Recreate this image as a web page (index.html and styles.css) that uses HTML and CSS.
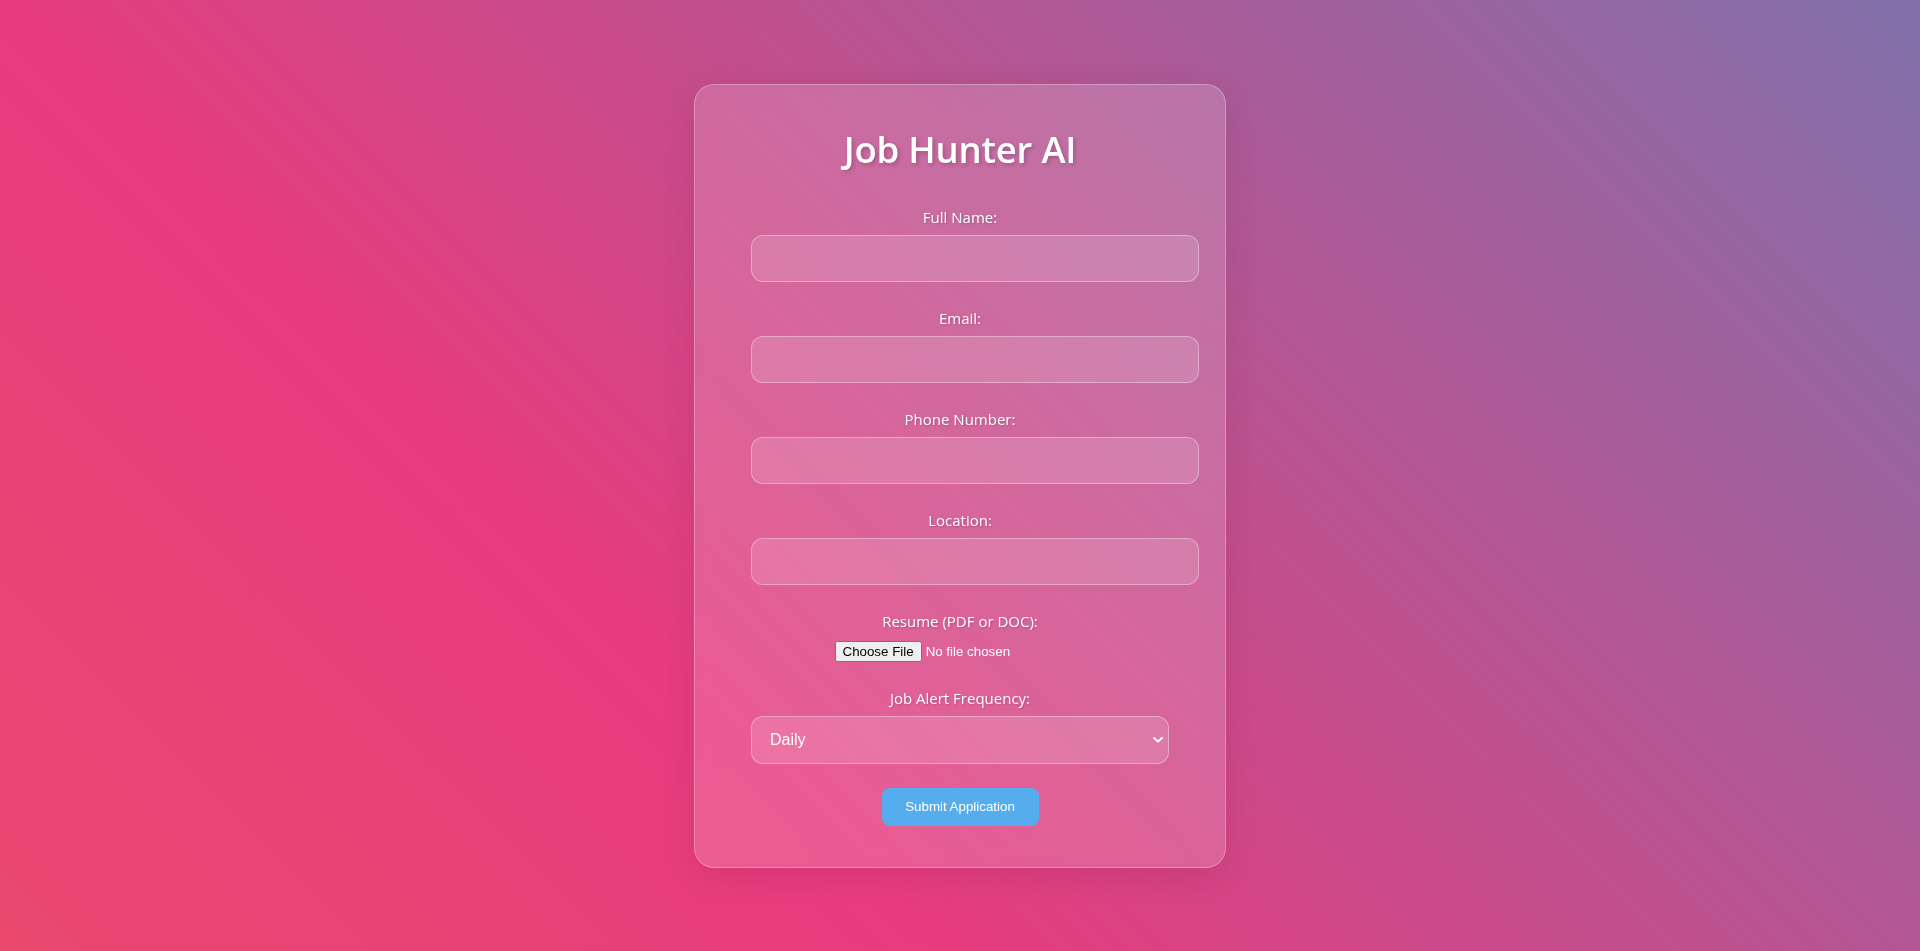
FILE: index.html
```html
<!DOCTYPE html>
<html lang="en">
<head>
<meta charset="utf-8">
<title>Job Hunter AI</title>
<link rel="stylesheet" href="styles.css">
</head>
<body>
<main class="card">
  <h1 class="title">Job Hunter AI</h1>
  <form class="form">
    <div class="group">
      <label class="label" for="name">Full Name:</label>
      <input class="field" id="name" type="text">
    </div>
    <div class="group">
      <label class="label" for="email">Email:</label>
      <input class="field" id="email" type="email">
    </div>
    <div class="group">
      <label class="label" for="phone">Phone Number:</label>
      <input class="field" id="phone" type="tel">
    </div>
    <div class="group">
      <label class="label" for="loc">Location:</label>
      <input class="field" id="loc" type="text">
    </div>
    <div class="group">
      <label class="label" for="resume">Resume (PDF or DOC):</label>
      <input class="file" id="resume" type="file">
    </div>
    <div class="group group-select">
      <label class="label" for="freq">Job Alert Frequency:</label>
      <div class="select-wrap">
        <select class="select" id="freq">
          <option>Daily</option>
          <option>Weekly</option>
          <option>Monthly</option>
        </select>
        <svg class="chevron" width="10" height="6" viewBox="0 0 10 6"><path d="M1 1 L5 4.6 L9 1" fill="none" stroke="#fff" stroke-width="2" stroke-linecap="round" stroke-linejoin="round"/></svg>
      </div>
    </div>
    <div class="actions">
      <button class="submit" type="button">Submit Application</button>
    </div>
  </form>
</main>
</body>
</html>
```
FILE: styles.css
```css
html, body {
  margin: 0;
  padding: 0;
}
body {
  min-height: 100vh;
  display: flex;
  align-items: center;
  justify-content: center;
  background: linear-gradient(45deg, #e9486e 0%, #e73c7e 33%, #8070aa 100%);
  font-family: "Open Sans", "Noto Sans", sans-serif;
  color: #fff;
}
.card {
  box-sizing: content-box;
  width: 418px;
  padding: 40px 56px 41px;
  border: 1px solid rgba(255, 255, 255, 0.28);
  border-radius: 20px;
  background: rgba(255, 255, 255, 0.16);
  backdrop-filter: blur(10px);
  box-shadow: 0 8px 32px rgba(80, 0, 40, 0.12);
}
.title {
  margin: 0 0 34px;
  text-align: center;
  font-size: 36.5px;
  line-height: 48px;
  font-weight: 600;
  letter-spacing: -0.2px;
  text-shadow: 2px 2px 4px rgba(0, 0, 0, 0.2);
}
.form {
  display: flex;
  flex-direction: column;
}
.group {
  display: flex;
  flex-direction: column;
  align-items: center;
  margin-bottom: 26px;
}
.group-select {
  margin-bottom: 24px;
}
.label {
  display: block;
  font-size: 15px;
  line-height: 20px;
  margin-bottom: 8px;
  text-shadow: 1px 1px 2px rgba(0, 0, 0, 0.2);
}
.field {
  box-sizing: border-box;
  align-self: flex-start;
  width: 448px;
  height: 47px;
  padding: 14px;
  border: 1px solid rgba(255, 255, 255, 0.35);
  border-radius: 12px;
  background: rgba(255, 255, 255, 0.14);
  color: #fff;
  font: 16px "Liberation Sans", Arial, sans-serif;
  outline: none;
}
.file {
  width: 251px;
  margin-top: 2px;
  font: 13.333px "Liberation Sans", Arial, sans-serif;
  color: #fff;
}
.file::file-selector-button {
  font: 13.333px "Liberation Sans", Arial, sans-serif;
}
.select-wrap {
  position: relative;
  align-self: stretch;
}
.select {
  -webkit-appearance: none;
  appearance: none;
  box-sizing: border-box;
  display: block;
  width: 100%;
  height: 48px;
  padding: 0 32px 0 18px;
  border: 1px solid rgba(255, 255, 255, 0.35);
  border-radius: 12px;
  background: rgba(255, 255, 255, 0.14);
  color: #fff;
  font: 16px "Liberation Sans", Arial, sans-serif;
  outline: none;
}
.chevron {
  position: absolute;
  right: 6px;
  top: 21px;
}
.actions {
  display: flex;
  justify-content: center;
}
.submit {
  box-sizing: border-box;
  width: 157px;
  height: 38px;
  padding: 0;
  border: none;
  border-radius: 8px;
  background: #56adee;
  color: #fff;
  font: 500 13.333px "Liberation Sans", Arial, sans-serif;
  cursor: pointer;
}
```
